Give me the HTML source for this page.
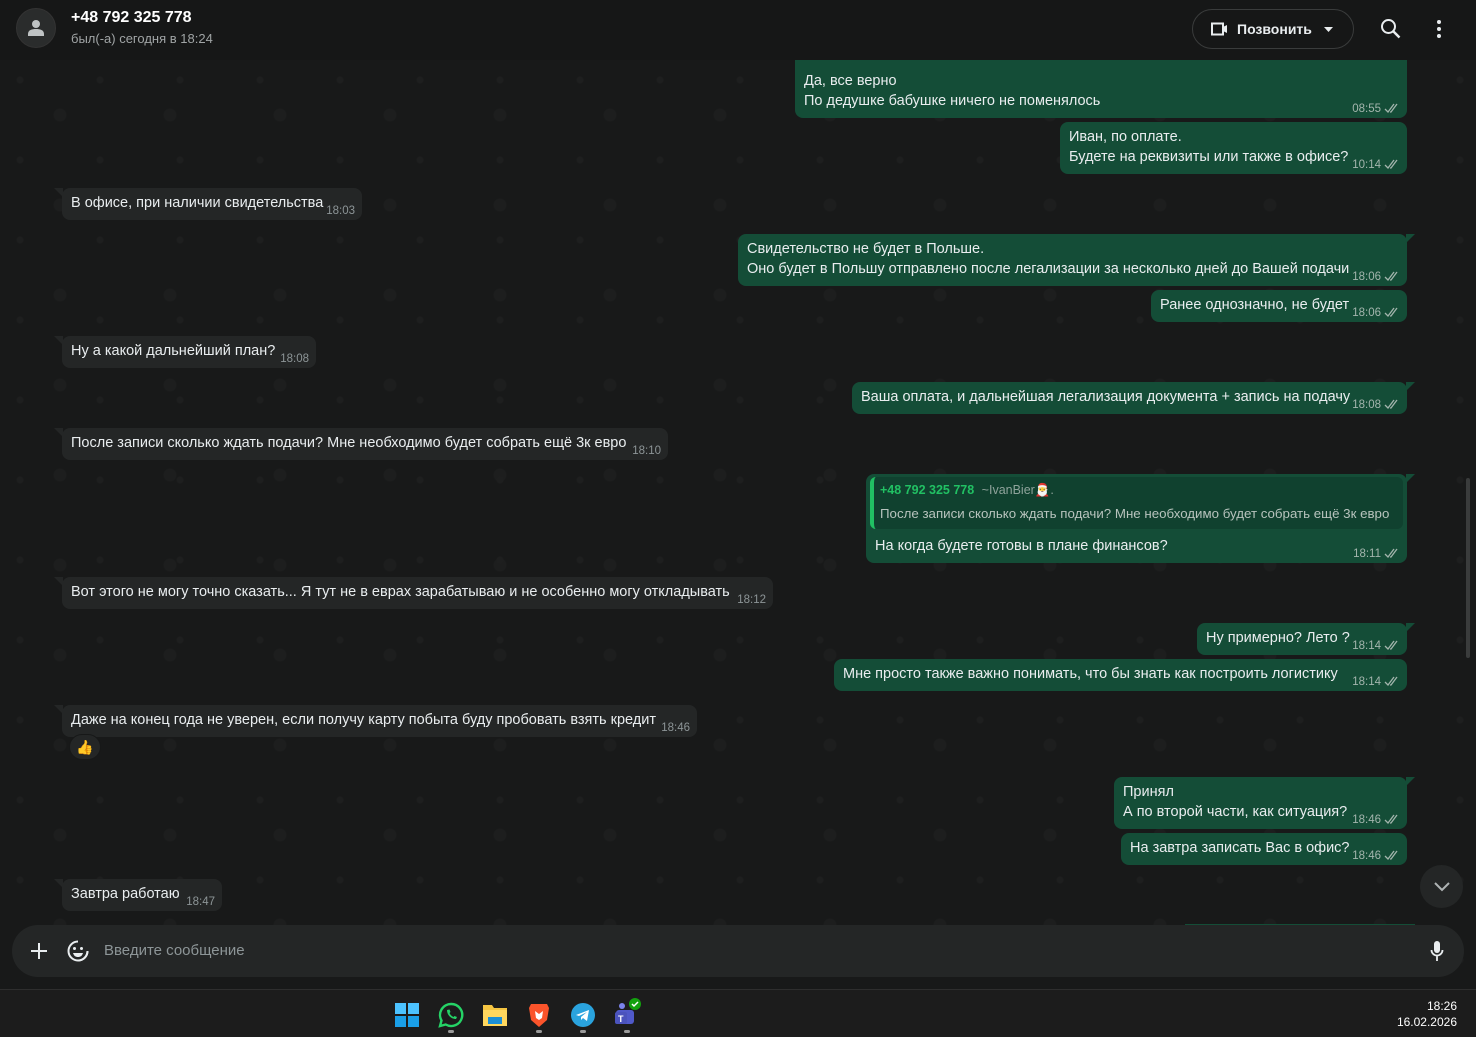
<!DOCTYPE html>
<html><head><meta charset="utf-8"><style>
*{margin:0;padding:0;box-sizing:border-box}
body{width:1476px;height:1037px;overflow:hidden;background:#161717;font-family:"Liberation Sans",sans-serif;color:#e9edef;position:relative}
.hdr{position:absolute;left:0;top:0;width:1476px;height:60px;background:#161717;z-index:5}
.chat{position:absolute;left:0;top:60px;width:1476px;height:929px;background:#181919;
background-image:radial-gradient(circle at 20px 20px,#1e1f1f 3px,transparent 4px),radial-gradient(circle at 60px 55px,#1d1e1e 6px,transparent 7px);background-size:80px 80px,110px 90px}
.b{position:absolute;border-radius:8px;font-size:14.5px;white-space:nowrap}
.o{background:#144d37}
.i{background:#242626}
.t{position:absolute;left:9px;line-height:20px;margin-top:1px}
.tm{position:absolute;right:7px;bottom:3px;font-size:11.5px;color:#a3b5ad}
.i .tm{color:#8d9597}
.ck{display:inline-block;margin-left:3px;vertical-align:-2px}
.tr{position:absolute;top:0;right:-8px;width:0;height:0;border-top:9px solid #144d37;border-right:9px solid transparent}
.tl{position:absolute;top:0;left:-8px;width:0;height:0;border-top:9px solid #242626;border-left:9px solid transparent}
.inp{position:absolute;left:12px;top:925px;width:1452px;height:52px;border-radius:26px;background:#242626}
.tb{position:absolute;left:0;top:989px;width:1476px;height:48px;background:#1c1c1c;border-top:1px solid #2e2e2e}
</style></head><body>
<div class="hdr">
 <div style="position:absolute;left:16px;top:8px;width:40px;height:40px;border-radius:50%;background:#2a2c2c;border:1px solid #333">
  <svg width="40" height="40" viewBox="0 0 40 40" style="position:absolute;left:-1px;top:-1px"><circle cx="20" cy="16" r="4" fill="#bfc3c4"/><path d="M12 26c0-4 4-5 8-5s8 1 8 5v2H12z" fill="#bfc3c4"/></svg>
 </div>
 <div style="position:absolute;left:71px;top:9px;font-size:16px;font-weight:bold;color:#fff">+48 792 325 778</div>
 <div style="position:absolute;left:71px;top:31px;font-size:13px;color:#a0a4a5">был(-а) сегодня в 18:24</div>
 <div style="position:absolute;left:1192px;top:9px;width:162px;height:40px;border:1px solid #3a3c3c;border-radius:20px">
  <svg width="18" height="14" style="position:absolute;left:18px;top:12px" viewBox="0 0 18 14"><rect x="1" y="1.5" width="11" height="11" fill="none" stroke="#e9edef" stroke-width="2"/><path d="M12 5l4-2v8l-4-2z" fill="#e9edef"/></svg>
  <span style="position:absolute;left:44px;top:11px;font-size:14px;font-weight:bold;color:#e9edef">Позвонить</span>
  <svg width="10" height="6" style="position:absolute;left:131px;top:17px"><path d="M0 0h9L4.5 5z" fill="#e9edef"/></svg>
 </div>
 <svg width="22" height="22" style="position:absolute;left:1380px;top:18px" viewBox="0 0 22 22"><circle cx="8.5" cy="8.5" r="6.5" fill="none" stroke="#e9edef" stroke-width="2"/><path d="M13.5 13.5l6 6" stroke="#e9edef" stroke-width="2.4"/></svg>
 <svg width="6" height="20" style="position:absolute;left:1436px;top:19px"><circle cx="3" cy="3" r="2" fill="#e9edef"/><circle cx="3" cy="10" r="2" fill="#e9edef"/><circle cx="3" cy="17" r="2" fill="#e9edef"/></svg>
</div>
<div class="chat"></div>

<div class="b o" style="left:795px;top:56px;width:612px;height:62px;border-radius:0 0 8px 8px"><div class="t" style="top:14px">Да, все верно<br>По дедушке бабушке ничего не поменялось</div><div class="tm">08:55<svg class="ck" width="16" height="11"><path d="M1 6l3 3 6-8M6 9l1 0 6-8" fill="none" stroke="#a3b5ad" stroke-width="1.3"/></svg></div></div>

<div class="b o" style="left:1060px;top:122px;width:347px;height:52px"><div class="t" style="top:4px">Иван, по оплате.<br>Будете на реквизиты или также в офисе?</div><div class="tm">10:14<svg class="ck" width="16" height="11"><path d="M1 6l3 3 6-8M6 9l1 0 6-8" fill="none" stroke="#a3b5ad" stroke-width="1.3"/></svg></div></div>

<div class="b i" style="left:62px;top:188px;width:300px;height:32px"><div class="tl"></div><div class="t" style="top:4px">В офисе, при наличии свидетельства</div><div class="tm">18:03</div></div>

<div class="b o" style="left:738px;top:234px;width:669px;height:52px"><div class="tr"></div><div class="t" style="top:4px">Свидетельство не будет в Польше.<br>Оно будет в Польшу отправлено после легализации за несколько дней до Вашей подачи</div><div class="tm">18:06<svg class="ck" width="16" height="11"><path d="M1 6l3 3 6-8M6 9l1 0 6-8" fill="none" stroke="#a3b5ad" stroke-width="1.3"/></svg></div></div>

<div class="b o" style="left:1151px;top:290px;width:256px;height:32px"><div class="t" style="top:4px">Ранее однозначно, не будет</div><div class="tm">18:06<svg class="ck" width="16" height="11"><path d="M1 6l3 3 6-8M6 9l1 0 6-8" fill="none" stroke="#a3b5ad" stroke-width="1.3"/></svg></div></div>

<div class="b i" style="left:62px;top:336px;width:254px;height:32px"><div class="tl"></div><div class="t" style="top:4px">Ну а какой дальнейший план?</div><div class="tm">18:08</div></div>

<div class="b o" style="left:852px;top:382px;width:555px;height:32px"><div class="tr"></div><div class="t" style="top:4px">Ваша оплата, и дальнейшая легализация документа + запись на подачу</div><div class="tm">18:08<svg class="ck" width="16" height="11"><path d="M1 6l3 3 6-8M6 9l1 0 6-8" fill="none" stroke="#a3b5ad" stroke-width="1.3"/></svg></div></div>

<div class="b i" style="left:62px;top:428px;width:606px;height:32px"><div class="tl"></div><div class="t" style="top:4px">После записи сколько ждать подачи? Мне необходимо будет собрать ещё 3к евро</div><div class="tm">18:10</div></div>

<div class="b o" style="left:866px;top:474px;width:541px;height:89px"><div class="tr"></div>
 <div style="position:absolute;left:4px;top:3px;width:533px;height:52px;background:#10412f;border-radius:6px;border-left:4px solid #21c063">
  <div style="position:absolute;left:6px;top:6px;font-size:12.5px;font-weight:bold;color:#21c063">+48 792 325 778 <span style="font-weight:normal;color:#8fa39b;margin-left:4px">~IvanBier🎅.</span></div>
  <div style="position:absolute;left:6px;top:29px;font-size:13.3px;color:#b7c3bd">После записи сколько ждать подачи? Мне необходимо будет собрать ещё 3к евро</div>
 </div>
 <div class="t" style="top:61px">На когда будете готовы в плане финансов?</div><div class="tm">18:11<svg class="ck" width="16" height="11"><path d="M1 6l3 3 6-8M6 9l1 0 6-8" fill="none" stroke="#a3b5ad" stroke-width="1.3"/></svg></div></div>

<div class="b i" style="left:62px;top:577px;width:711px;height:32px"><div class="tl"></div><div class="t" style="top:4px">Вот этого не могу точно сказать... Я тут не в еврах зарабатываю и не особенно могу откладывать</div><div class="tm">18:12</div></div>

<div class="b o" style="left:1197px;top:623px;width:210px;height:32px"><div class="tr"></div><div class="t" style="top:4px">Ну примерно? Лето ?</div><div class="tm">18:14<svg class="ck" width="16" height="11"><path d="M1 6l3 3 6-8M6 9l1 0 6-8" fill="none" stroke="#a3b5ad" stroke-width="1.3"/></svg></div></div>

<div class="b o" style="left:834px;top:659px;width:573px;height:32px"><div class="t" style="top:4px">Мне просто также важно понимать, что бы знать как построить логистику</div><div class="tm">18:14<svg class="ck" width="16" height="11"><path d="M1 6l3 3 6-8M6 9l1 0 6-8" fill="none" stroke="#a3b5ad" stroke-width="1.3"/></svg></div></div>

<div class="b i" style="left:62px;top:705px;width:635px;height:32px"><div class="tl"></div><div class="t" style="top:4px">Даже на конец года не уверен, если получу карту побыта буду пробовать взять кредит</div><div class="tm">18:46</div></div>
<div style="position:absolute;left:69px;top:734px;width:32px;height:26px;border-radius:13px;background:#242626;border:1px solid #171818;font-size:14px;text-align:center;line-height:24px">👍</div>

<div class="b o" style="left:1114px;top:777px;width:293px;height:52px"><div class="tr"></div><div class="t" style="top:4px">Принял<br>А по второй части, как ситуация?</div><div class="tm">18:46<svg class="ck" width="16" height="11"><path d="M1 6l3 3 6-8M6 9l1 0 6-8" fill="none" stroke="#a3b5ad" stroke-width="1.3"/></svg></div></div>

<div class="b o" style="left:1121px;top:833px;width:286px;height:32px"><div class="t" style="top:4px">На завтра записать Вас в офис?</div><div class="tm">18:46<svg class="ck" width="16" height="11"><path d="M1 6l3 3 6-8M6 9l1 0 6-8" fill="none" stroke="#a3b5ad" stroke-width="1.3"/></svg></div></div>

<div class="b i" style="left:62px;top:879px;width:160px;height:32px"><div class="tl"></div><div class="t" style="top:4px">Завтра работаю</div><div class="tm">18:47</div></div>

<div style="position:absolute;left:1185px;top:924px;width:230px;height:3px;background:#144d37"></div>
<div style="position:absolute;left:1420px;top:865px;width:43px;height:43px;border-radius:50%;background:#242626">
 <svg width="16" height="10" style="position:absolute;left:14px;top:17px"><path d="M1 1l7 7 7-7" fill="none" stroke="#aeb3b4" stroke-width="2"/></svg>
</div>
<div style="position:absolute;left:1466px;top:478px;width:4px;height:180px;background:#3a3c3c;border-radius:2px"></div>

<div class="inp">
 <svg width="16" height="16" style="position:absolute;left:19px;top:18px"><path d="M8 0v16M0 8h16" stroke="#e9edef" stroke-width="2"/></svg>
 <svg width="22" height="22" style="position:absolute;left:55px;top:15px" viewBox="0 0 22 22"><path d="M11 1.5a9.5 9.5 0 1 0 9.5 9.5" fill="none" stroke="#e9edef" stroke-width="2"/><path d="M20.5 11c0 5-4 9.5-9 9.5" fill="none" stroke="#e9edef" stroke-width="2"/><circle cx="7.5" cy="8.5" r="1.5" fill="#e9edef"/><circle cx="14.5" cy="8.5" r="1.5" fill="#e9edef"/><path d="M6 13h10c-1 3-2.5 4-5 4s-4-1-5-4z" fill="#e9edef"/></svg>
 <span style="position:absolute;left:92px;top:17px;font-size:15px;color:#8d9597">Введите сообщение</span>
 <svg width="14" height="22" style="position:absolute;left:1418px;top:15px" viewBox="0 0 14 22"><rect x="4" y="1" width="6" height="12" rx="3" fill="#e9edef"/><path d="M1.5 10a5.5 5.5 0 0 0 11 0M7 16v5" fill="none" stroke="#e9edef" stroke-width="1.8"/></svg>
</div>

<div class="tb">
 <svg width="24" height="24" style="position:absolute;left:395px;top:13px"><rect x="0" y="0" width="11" height="11" fill="#4cc2ff"/><rect x="13" y="0" width="11" height="11" fill="#4cc2ff"/><rect x="0" y="13" width="11" height="11" fill="#1a9fe8"/><rect x="13" y="13" width="11" height="11" fill="#1a9fe8"/></svg>
 <svg width="26" height="26" style="position:absolute;left:438px;top:12px" viewBox="0 0 26 26"><path d="M13 2a11 11 0 0 0-9.5 16.5L2 24l5.7-1.5A11 11 0 1 0 13 2z" fill="none" stroke="#25d366" stroke-width="2.4"/><path d="M9 8c0 5 4 9 9 9l1-2-2.5-1-1 1c-2-1-3-2-4-4l1-1-1-2.5z" fill="#25d366"/></svg>
 <svg width="26" height="24" style="position:absolute;left:482px;top:13px"><path d="M1 2h9l2 3h13v18H1z" fill="#f5c542"/><rect x="1" y="7" width="24" height="16" fill="#ffd75e"/><rect x="6" y="14" width="14" height="7" fill="#1b8fd6"/></svg>
 <svg width="22" height="26" style="position:absolute;left:528px;top:12px"><path d="M3 2h16l2 4-2 12-8 7-8-7L1 6z" fill="#fb542b"/><path d="M7 9l4 3 4-3-1 7-3 2-3-2z" fill="#fff"/></svg>
 <svg width="24" height="24" style="position:absolute;left:571px;top:13px"><circle cx="12" cy="12" r="12" fill="#2aa3de"/><path d="M5 12l13-5-2 11-4-3-2 2v-3l6-5-8 4z" fill="#fff"/></svg>
 <svg width="28" height="28" style="position:absolute;left:613px;top:8px"><circle cx="9" cy="8" r="3" fill="#7b83eb"/><rect x="3" y="12" width="18" height="14" rx="3" fill="#5059c9"/><rect x="2" y="14" width="12" height="12" rx="2" fill="#4b53bc"/><text x="5" y="24" font-size="9" fill="#fff" font-family="Liberation Sans" font-weight="bold">T</text><circle cx="22" cy="6" r="6" fill="#13a10e"/><path d="M19 6l2 2 4-4" stroke="#fff" stroke-width="1.5" fill="none"/></svg>
 <div style="position:absolute;left:448px;top:40px;width:6px;height:3px;border-radius:2px;background:#9a9a9a"></div>
 <div style="position:absolute;left:536px;top:40px;width:6px;height:3px;border-radius:2px;background:#9a9a9a"></div>
 <div style="position:absolute;left:580px;top:40px;width:6px;height:3px;border-radius:2px;background:#9a9a9a"></div>
 <div style="position:absolute;left:624px;top:40px;width:6px;height:3px;border-radius:2px;background:#9a9a9a"></div>
 <div style="position:absolute;right:19px;top:8px;font-size:12px;color:#fff;text-align:right;line-height:16px">18:26<br>16.02.2026</div>
</div>
</body></html>
